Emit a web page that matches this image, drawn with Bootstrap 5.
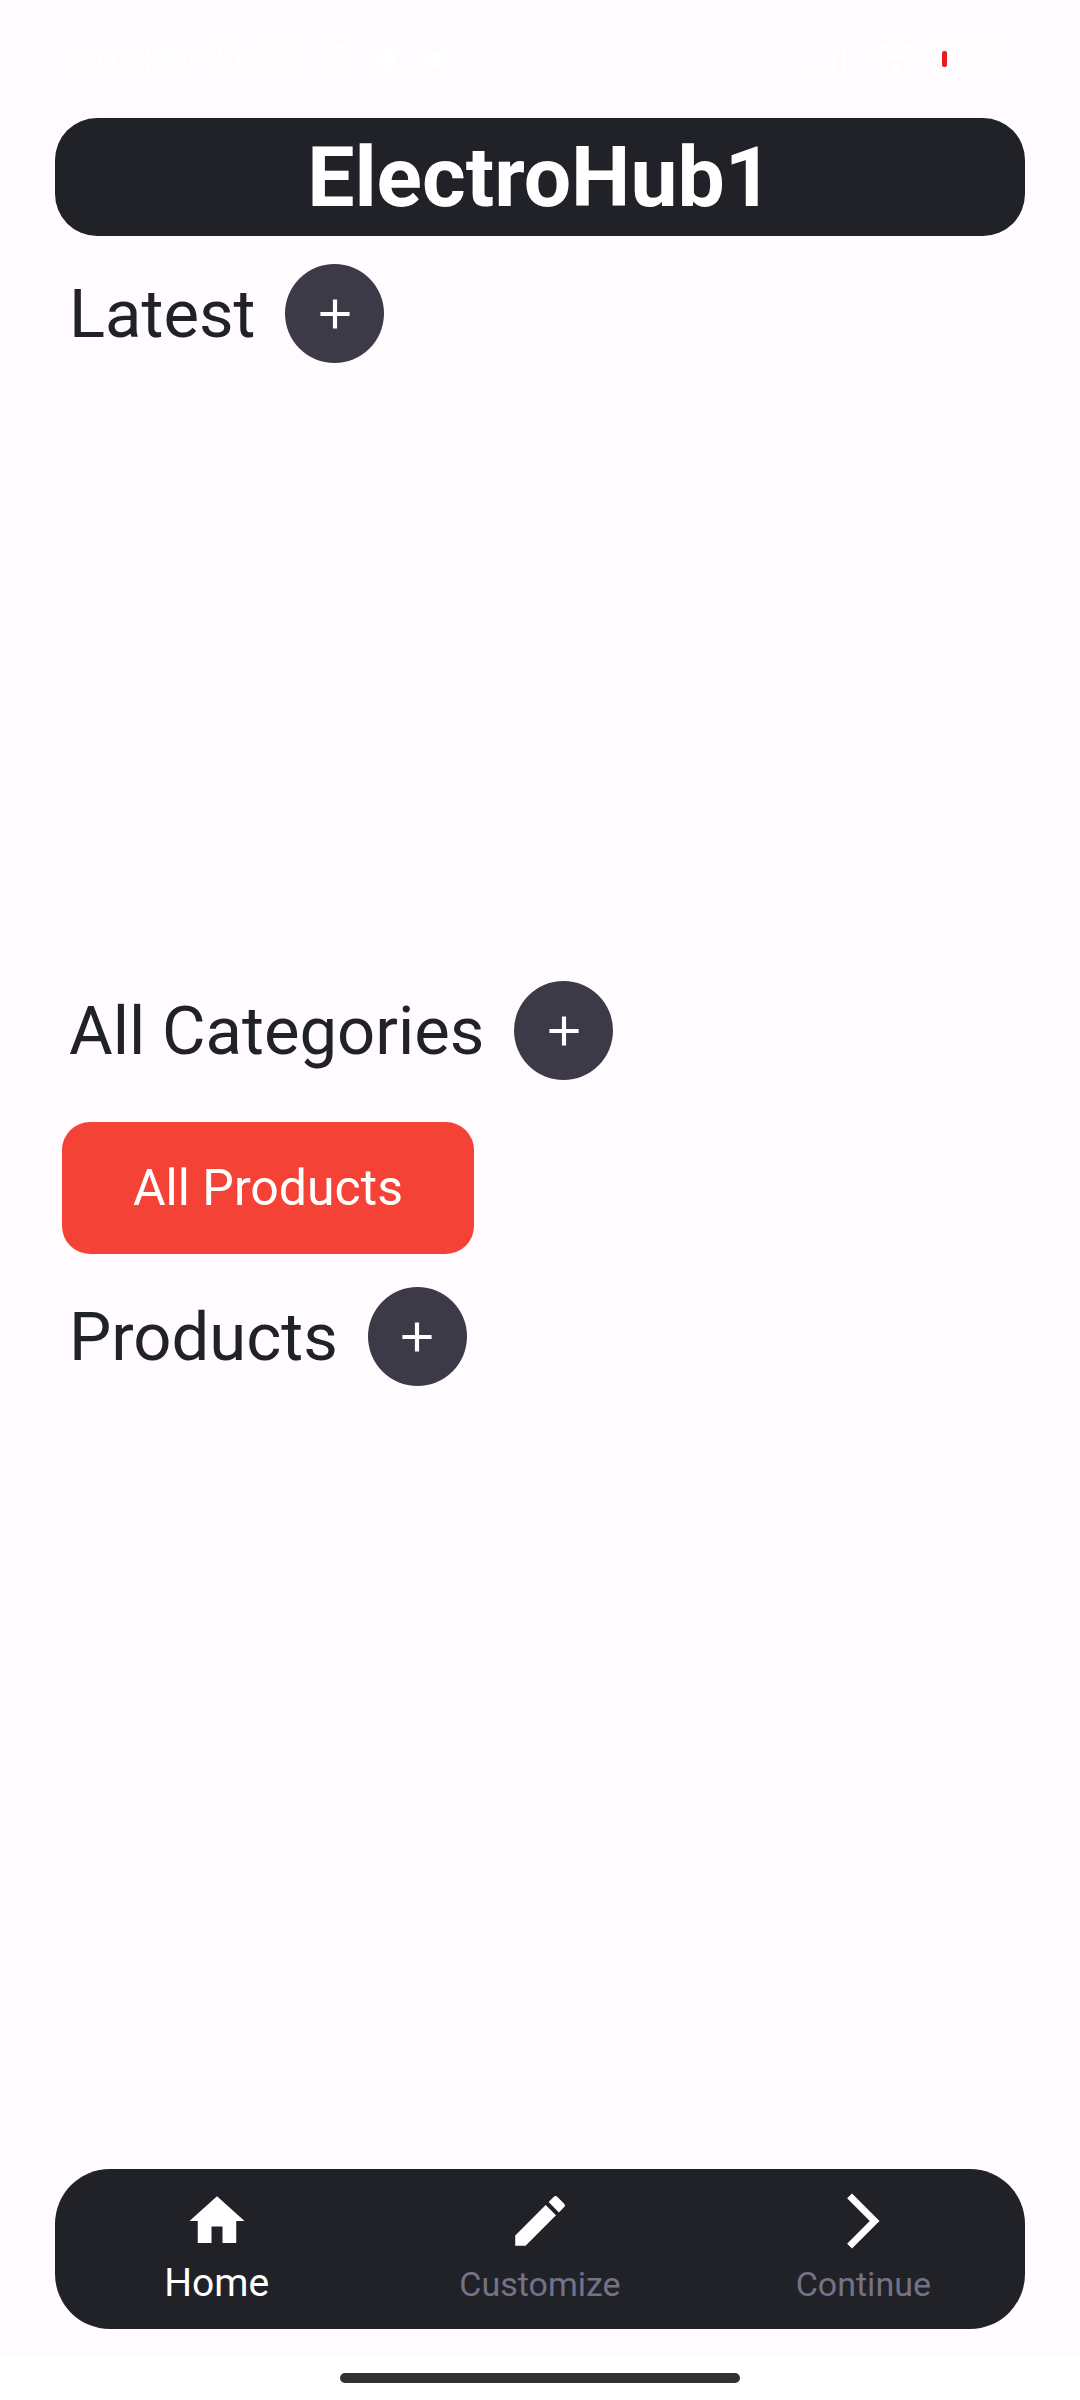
<!DOCTYPE html>
<html lang="en">
<head>
<meta charset="utf-8">
<meta name="viewport" content="width=device-width, initial-scale=1">
<title>ElectroHub1</title>
<link href="https://cdn.jsdelivr.net/npm/bootstrap@5.3.0/dist/css/bootstrap.min.css" rel="stylesheet">
<style>
  body { background: #fffbff; color: #212227; font-family: Roboto, sans-serif; }
  svg { fill: currentColor; display: block; flex: none; }
  .status-bar { height: 118px; padding: 0 77px 0 70px; color: #fff; }
  .status-time { font-size: 34px; line-height: 40px; }
  .status-left { gap: 10px; }
  .battery-label { font-size: 20px; }
  .dark-panel { background: #212227; color: #fff; margin: 0 55px; }
  .app-bar { border-radius: 42px; padding-top: 2px; }
  .app-title { font-size: 84px; line-height: 116px; font-weight: 700; }
  .section-head { padding: 0 69px; gap: 30px; }
  .section-title { font-size: 67px; line-height: 98px; font-weight: 400; }
  .add-btn { width: 99px; height: 99px; background: #3b3a46; color: #fff; }
  .add-btn:hover { background: #4a4957; color: #fff; }
  .latest-area { margin-top: 28px; }
  .latest-list { min-height: 618px; }
  .category-list { padding: 42px 62px 33px; }
  .category-btn { background: #f44336; color: #fff; font-size: 50px; line-height: 60px; padding: 36px 71px; border: 0; border-radius: 28px; }
  .category-btn:hover { background: #e53935; color: #fff; }
  .bottom-nav { border-radius: 55px; padding: 19px 0 17px; margin-bottom: 27px; }
  .tab-link { color: #fff; }
  .tab-label { font-size: 39px; line-height: 58px; }
  .tab-label small { font-size: 34px; line-height: 1; color: #737287; }
  .gesture-area { height: 44px; background: #fff; }
  .gesture-pill { width: 37%; height: 10px; background: #323232; }
</style>
</head>
<body class="d-flex flex-column min-vh-100">
  <div class="status-bar d-flex align-items-center justify-content-between">
    <div class="status-left d-flex align-items-center">
      <span class="status-time">8:03 PM</span>
      <div class="d-flex align-items-center gap-3">
        <svg width="44" height="38" viewBox="0 0 44 38" stroke="#fff" stroke-width="3"><path d="M10 29h27l-4-5V15C33 1 14 1 14 15v9zM5 34 34 3M19 34h8M2 14v8M42 14v8" fill="none"/></svg>
        <svg width="40" height="36" viewBox="0 0 40 36" stroke="#fff" stroke-width="3"><g fill="none"><circle cx="20" cy="19" r="14"/><path d="m14 17 5 5 7-6M3 8l7-6M30 2l7 6"/></g></svg>
        <svg width="32" height="30" viewBox="0 0 32 30" stroke="#fff" stroke-width="3"><path fill="none" d="M11 2h10l9 17-5 9H7l-5-9zM16 11l5 9H11z"/></svg>
        <svg width="34" height="28" viewBox="0 0 34 28"><path d="M12 3h10l6 7v10l6 4-3 4-7-4-7 4-6-4-8 4-3-4 6-4V10z"/></svg>
        <svg width="30" height="26" viewBox="0 0 30 26"><path d="m5 2 10 5 10-5 3 5-7 6 6 9-5 2-9-5-8 5-3-4 5-7-6-6z"/></svg>
      </div>
    </div>
    <div class="d-flex align-items-center gap-3">
      <svg class="me-2" width="38" height="28" viewBox="0 0 38 28" stroke="#fff" stroke-width="5" stroke-linecap="round"><path d="M3 25h0M13 25v-5M23 25V13M33 25V4"/></svg>
      <svg width="46" height="36" viewBox="0 0 46 36"><path d="M3 12c12-11 28-11 40 0M10 20c8-7 18-7 26 0" fill="none" stroke="#fff" stroke-width="5"/><circle cx="23" cy="29" r="5"/></svg>
      <svg width="68" height="30" viewBox="0 0 68 30"><rect x="2" y="2" width="58" height="26" rx="6" fill="none" stroke="#fff" stroke-width="3"/><rect x="7" y="7" width="5" height="16" rx="2" fill="#e81c1c"/><path d="M64 10h3v10h-3z"/><text x="21" y="22" class="battery-label">10</text></svg>
    </div>
  </div>

  <header class="app-bar dark-panel">
    <h1 class="app-title text-center mb-0">ElectroHub1</h1>
  </header>

  <main class="flex-grow-1">
    <section class="latest-area">
      <div class="section-head d-flex align-items-center">
        <h2 class="section-title mb-0">Latest</h2>
        <button type="button" class="add-btn btn rounded-circle border-0 p-0 d-flex align-items-center justify-content-center" aria-label="Add latest item">
          <svg width="50" height="50" viewBox="0 0 24 24"><path d="M19 13h-6v6h-2v-6H5v-2h6V5h2v6h6z"/></svg>
        </button>
      </div>
      <div class="latest-list"></div>
    </section>

    <section>
      <div class="section-head d-flex align-items-center">
        <h2 class="section-title mb-0">All Categories</h2>
        <button type="button" class="add-btn btn rounded-circle border-0 p-0 d-flex align-items-center justify-content-center" aria-label="Add category">
          <svg width="50" height="50" viewBox="0 0 24 24"><path d="M19 13h-6v6h-2v-6H5v-2h6V5h2v6h6z"/></svg>
        </button>
      </div>
      <div class="category-list d-flex flex-wrap">
        <button type="button" class="category-btn btn">All Products</button>
      </div>
    </section>

    <section>
      <div class="section-head d-flex align-items-center">
        <h2 class="section-title mb-0">Products</h2>
        <button type="button" class="add-btn btn rounded-circle border-0 p-0 d-flex align-items-center justify-content-center" aria-label="Add product">
          <svg width="50" height="50" viewBox="0 0 24 24"><path d="M19 13h-6v6h-2v-6H5v-2h6V5h2v6h6z"/></svg>
        </button>
      </div>
    </section>
  </main>

  <nav class="bottom-nav dark-panel" aria-label="Main">
    <div class="row g-0">
      <a href="#home" class="tab-link col d-flex flex-column align-items-center text-decoration-none" aria-current="page">
        <svg width="66" height="66" viewBox="0 0 24 24"><path d="M10 20v-6h4v6h5v-8h3L12 3 2 12h3v8z"/></svg>
        <span class="tab-label">Home</span>
      </a>
      <a href="#customize" class="tab-link col d-flex flex-column align-items-center text-decoration-none">
        <svg width="66" height="66" viewBox="0 0 24 24"><path d="M3 17.25V21h3.75L17.81 9.94l-3.75-3.75zM20.71 7.04a1 1 0 0 0 0-1.41l-2.34-2.34a1 1 0 0 0-1.41 0l-1.83 1.83 3.75 3.75z"/></svg>
        <span class="tab-label"><small>Customize</small></span>
      </a>
      <a href="#continue" class="tab-link col d-flex flex-column align-items-center text-decoration-none">
        <svg width="66" height="66" viewBox="0 0 24 24"><path d="M6.23 20.23 8 22l10-10L8 2 6.23 3.77 14.46 12z"/></svg>
        <span class="tab-label"><small>Continue</small></span>
      </a>
    </div>
  </nav>
  <div class="gesture-area d-flex align-items-center justify-content-center">
    <div class="gesture-pill rounded-pill"></div>
  </div>
<script src="https://cdn.jsdelivr.net/npm/bootstrap@5.3.0/dist/js/bootstrap.bundle.min.js"></script>
</body>
</html>
